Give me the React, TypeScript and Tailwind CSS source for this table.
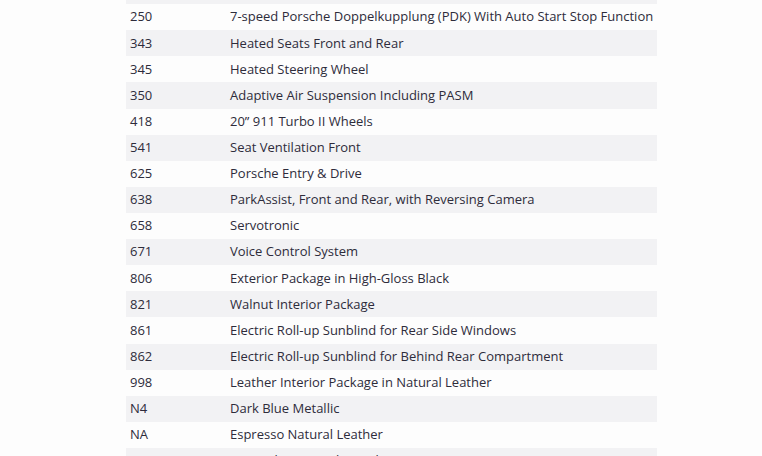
const rows: [string, string][] = [
  ["", ""],
  ["250", "7-speed Porsche Doppelkupplung (PDK) With Auto Start Stop Function"],
  ["343", "Heated Seats Front and Rear"],
  ["345", "Heated Steering Wheel"],
  ["350", "Adaptive Air Suspension Including PASM"],
  ["418", "20\u201D 911 Turbo II Wheels"],
  ["541", "Seat Ventilation Front"],
  ["625", "Porsche Entry & Drive"],
  ["638", "ParkAssist, Front and Rear, with Reversing Camera"],
  ["658", "Servotronic"],
  ["671", "Voice Control System"],
  ["806", "Exterior Package in High-Gloss Black"],
  ["821", "Walnut Interior Package"],
  ["861", "Electric Roll-up Sunblind for Rear Side Windows"],
  ["862", "Electric Roll-up Sunblind for Behind Rear Compartment"],
  ["998", "Leather Interior Package in Natural Leather"],
  ["N4", "Dark Blue Metallic"],
  ["NA", "Espresso Natural Leather"],
  ["XD", "Sport Chrono Package Plus"],
];

export default function App() {
  return (
    <div className="w-[762px] h-[456px] overflow-hidden bg-[#fdfdfd] font-['Open_Sans',sans-serif] text-[13px] font-medium text-[#2e2c3b]">
      <div className="mt-[-22px] ml-[126px] w-[531px]">
        {rows.map(([code, desc], i) => (
          <div
            key={i}
            className={`flex items-center h-[26.12px] ${i % 2 === 0 ? "bg-[#f2f2f4]" : ""}`}
          >
            <div className="w-[104px] pl-[4px] shrink-0">{code}</div>
            <div className="whitespace-nowrap">{desc}</div>
          </div>
        ))}
      </div>
    </div>
  );
}
